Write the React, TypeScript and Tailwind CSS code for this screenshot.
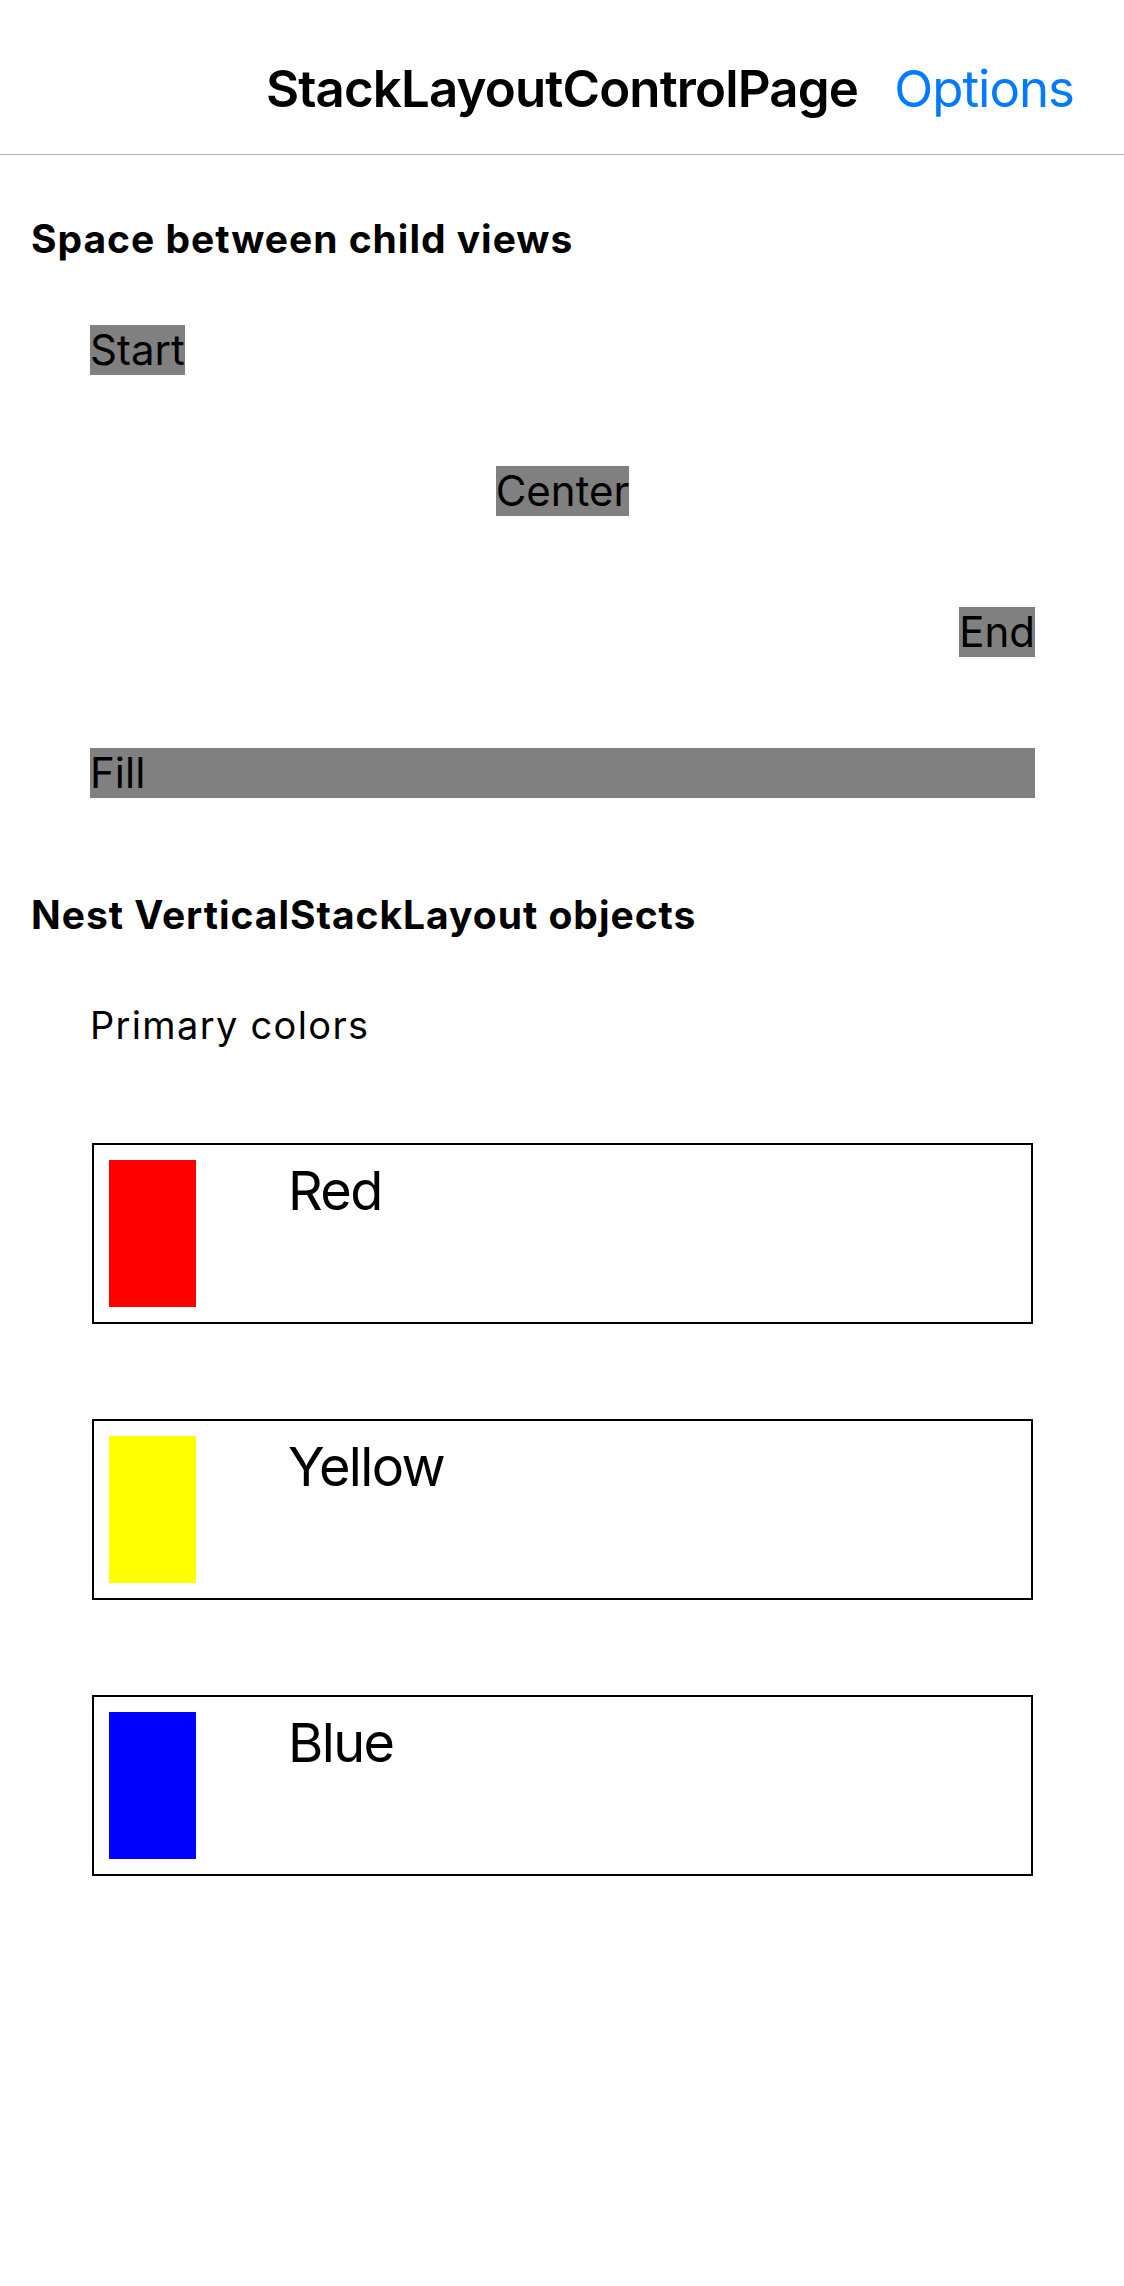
import React from "react";

const font = { fontFamily: "Inter, 'Noto Sans', 'Liberation Sans', sans-serif" };

type Swatch = { name: string; color: string };

const swatches: Swatch[] = [
  { name: "Red", color: "bg-[#ff0000]" },
  { name: "Yellow", color: "bg-[#ffff00]" },
  { name: "Blue", color: "bg-[#0000ff]" },
];

function NavBar() {
  return (
    <div className="grid h-[155px] grid-cols-[1fr_auto_1fr] items-start border-b border-[#b3b3b3] bg-white pt-[63px]">
      <div />
      <h1 className="text-[51px] leading-none font-semibold tracking-[-0.017em] text-black">
        StackLayoutControlPage
      </h1>
      <button className="justify-self-end pr-[50px] text-[51px] leading-none tracking-[-0.02em] text-[#007aff]">
        Options
      </button>
    </div>
  );
}

function SectionTitle({ children, className = "" }: { children: React.ReactNode; className?: string }) {
  return (
    <h2 className={`pl-[31px] text-[39px] leading-none font-bold tracking-[0.025em] text-black ${className}`}>
      {children}
    </h2>
  );
}

function ColorRow({ swatch }: { swatch: Swatch }) {
  return (
    <div className="flex h-[181px] items-start border-2 border-black p-[15px]">
      <div className={`h-[147px] w-[87px] shrink-0 ${swatch.color}`} />
      <span className="ml-[92px] mt-[4px] text-[54px] leading-none tracking-[-0.03em] text-black">
        {swatch.name}
      </span>
    </div>
  );
}

export default function App() {
  return (
    <div className="min-h-[2286px] w-[1124px] bg-white" style={font}>
      <NavBar />

      {/* Space between child views */}
      <SectionTitle className="mt-[64px]">Space between child views</SectionTitle>
      <div className="ml-[90px] mt-[67px] flex w-[945px] flex-col gap-[91px] text-[42px] leading-[50px] text-black">
        <div className="self-start bg-[#808080]">Start</div>
        <div className="self-center bg-[#808080]">Center</div>
        <div className="self-end bg-[#808080]">End</div>
        <div className="bg-[#808080]">Fill</div>
      </div>

      {/* Nest VerticalStackLayout objects */}
      <SectionTitle className="mt-[97px]">Nest VerticalStackLayout objects</SectionTitle>
      <p className="ml-[90px] mt-[72px] text-[38px] leading-none tracking-[0.035em] text-black">Primary colors</p>
      <div className="ml-[92px] mt-[99px] flex w-[941px] flex-col gap-[95px]">
        {swatches.map((s) => (
          <ColorRow key={s.name} swatch={s} />
        ))}
      </div>
    </div>
  );
}
